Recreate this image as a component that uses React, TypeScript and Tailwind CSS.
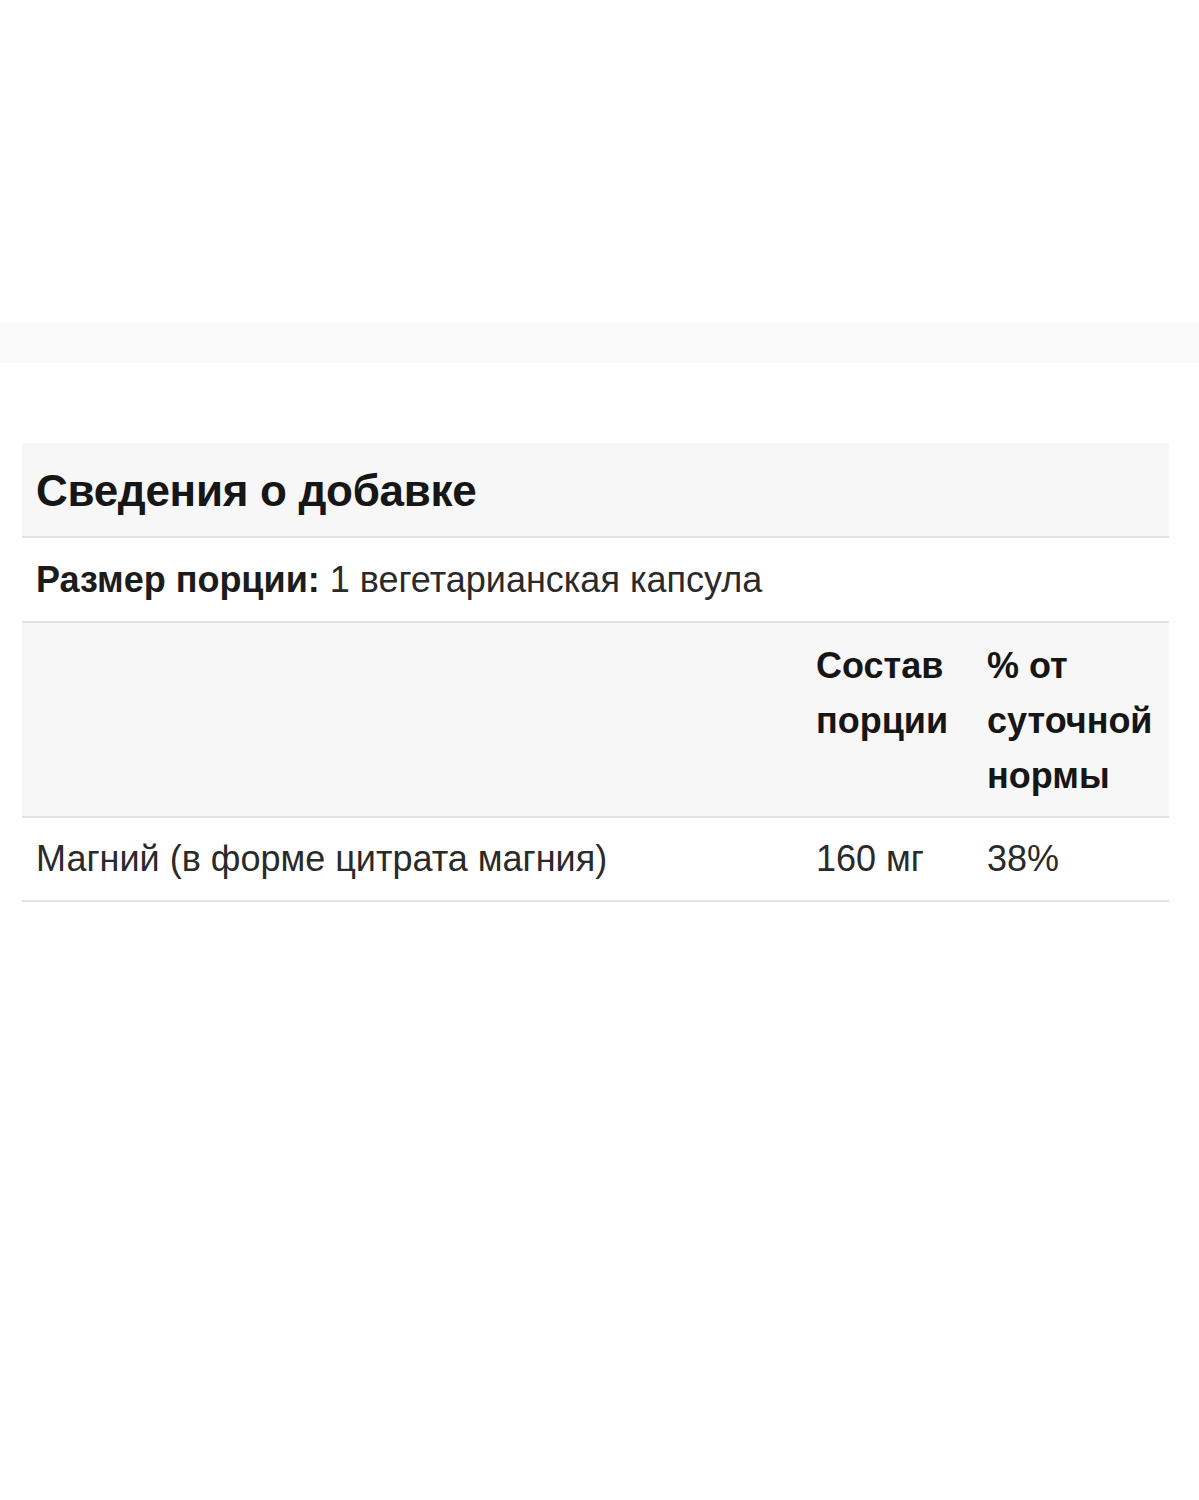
export default function App() {
  return (
    <div className="w-[1199px] h-[1500px] bg-white text-[#1c1c1c]" style={{ fontFamily: "'Liberation Sans', Arial, sans-serif" }}>
      <div className="h-[322px]" />
      <div className="h-[41px] bg-[#f9f9f9]" />
      <div className="h-[80px]" />
      <div className="mx-[22px] w-[1147px]">
        <div className="h-[95px] bg-[#f7f7f7] border-b-2 border-[#e2e2e2] px-[14px] flex items-center">
          <h2 className="text-[44px] font-bold tracking-[-0.3px] text-[#161616] pt-[2px]">Сведения о добавке</h2>
        </div>
        <div className="h-[85px] border-b-2 border-[#e2e2e2] px-[14px] flex items-center text-[36px]">
          <span className="font-bold">Размер порции:</span>
          <span className="ml-[10px] text-[#2a2a2a]">1 вегетарианская капсула</span>
        </div>
        <div className="grid grid-cols-[780px_171px_1fr] h-[195px] bg-[#f7f7f7] border-b-2 border-[#e2e2e2] pt-[15px] px-[14px] text-[36px] font-bold leading-[55px] text-[#161616]">
          <div />
          <div>
            Состав
            <br />
            порции
          </div>
          <div>
            % от
            <br />
            суточной
            <br />
            нормы
          </div>
        </div>
        <div className="grid grid-cols-[780px_171px_1fr] h-[84px] items-center border-b-2 border-[#e2e2e2] px-[14px] text-[36px] text-[#2a2a2a]">
          <div>Магний (в форме цитрата магния)</div>
          <div>160 мг</div>
          <div>38%</div>
        </div>
      </div>
    </div>
  );
}
